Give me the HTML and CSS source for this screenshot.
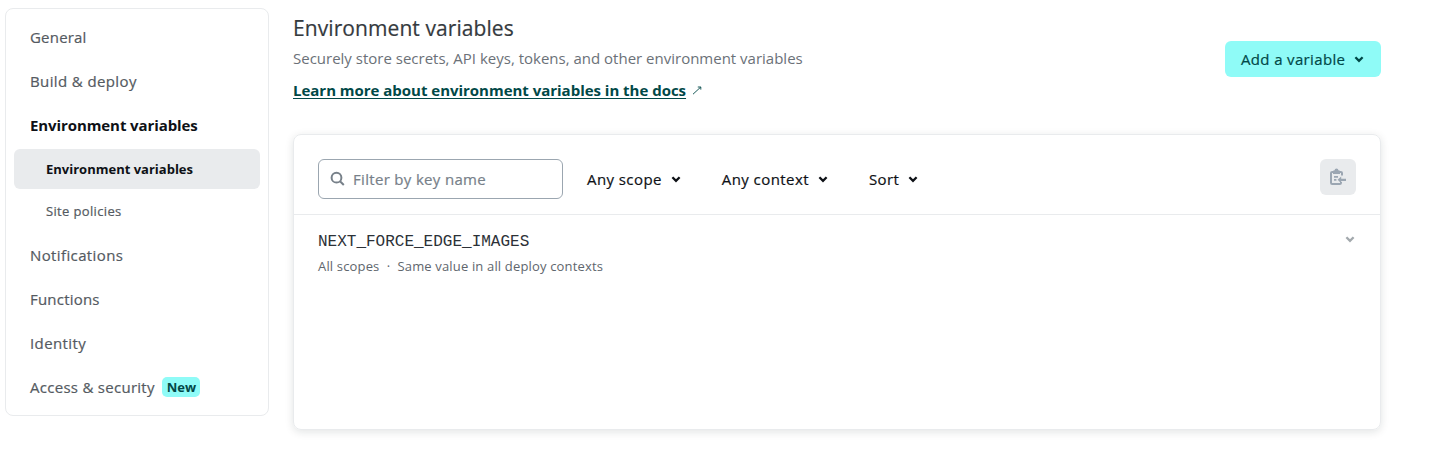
FILE: index.html
```html
<!DOCTYPE html>
<html lang="en">
<head>
<meta charset="utf-8">
<title>Environment variables</title>
<link rel="stylesheet" href="styles.css">
</head>
<body>
<div class="layout">
  <nav class="sidebar">
    <a class="item snug">General</a>
    <a class="item loose">Build &amp; deploy</a>
    <a class="item current">Environment variables</a>
    <a class="item sub active">Environment variables</a>
    <a class="item sub tight">Site policies</a>
    <a class="item loose">Notifications</a>
    <a class="item snug">Functions</a>
    <a class="item loose">Identity</a>
    <a class="item">Access &amp; security<span class="badge">New</span></a>
  </nav>
  <main class="main">
    <header class="head">
      <div>
        <h1>Environment variables</h1>
        <p class="desc">Securely store secrets, API keys, tokens, and other environment variables</p>
        <p class="docs"><a>Learn more about environment variables in the docs</a>
          <svg width="10" height="10" viewBox="0 0 10 10"><path d="M1 9.2 8.6 2.2M5.8 2h3v2.6" fill="none" stroke="currentColor" stroke-width=".9"/></svg>
        </p>
      </div>
      <button class="add"><span>Add a variable</span>
        <svg class="chev" viewBox="0 0 10 7"><path d="M1.4 1.3 5 4.9 8.6 1.3"/></svg></button>
    </header>
    <section class="card">
      <div class="toolbar">
        <label class="search">
          <svg width="16" height="16" viewBox="0 0 16 16"><circle cx="6.5" cy="6.7" r="4.9"/><path d="m10 10.2 3.8 3.8"/></svg>
          <span>Filter by key name</span>
        </label>
        <div class="drop"><span>Any scope</span><svg class="chev" viewBox="0 0 10 7"><path d="M1.4 1.3 5 4.9 8.6 1.3"/></svg></div>
        <div class="drop"><span>Any context</span><svg class="chev" viewBox="0 0 10 7"><path d="M1.4 1.3 5 4.9 8.6 1.3"/></svg></div>
        <div class="drop"><span>Sort</span><svg class="chev" viewBox="0 0 10 7"><path d="M1.4 1.3 5 4.9 8.6 1.3"/></svg></div>
        <button class="paste" aria-label="Paste">
          <svg width="16" height="16" viewBox="0 0 16 16"><path d="M3 2.9H2.2Q1 2.9 1 4v9.8q0 1.2 1.2 1.2h7.6q1.2 0 1.2-1.2V13M10 2.9h.8q1.2 0 1.2 1.2v2.4" fill="none" stroke="currentColor" stroke-width="2"/><path d="M3 5V1.8L4.6 1.2a1.9 1.7 0 0 1 3.8 0L10 1.8V5zM4 7h4v1.7H4zM4 10h2.4v1.7H4zM7.6 10.8l3.6-3.4v2.3H16v2.2h-4.8v2.3z" fill="currentColor"/></svg>
        </button>
      </div>
      <div class="row">
        <div>
          <div class="key">NEXT_FORCE_EDGE_IMAGES</div>
          <div class="meta"><span>All scopes</span><span class="dot">·</span><span>Same value in all deploy contexts</span></div>
        </div>
        <svg class="chev muted" viewBox="0 0 10 7"><path d="M1.4 1.3 5 4.9 8.6 1.3"/></svg>
      </div>
    </section>
  </main>
</div>
</body>
</html>
```
FILE: styles.css
```css
* { box-sizing: border-box; }
body {
  margin: 0;
  min-height: 457px;
  background: #fff;
  font-family: "Open Sans", "Noto Sans", sans-serif;
  font-size: 15px;
  color: #545a61;
}
.layout { display: flex; gap: 24px; padding: 8px 0 19px 5px; align-items: flex-start; }
.sidebar {
  width: 264px;
  height: 408px;
  padding: 8px;
  border: 1px solid #e9ebed;
  border-radius: 8px;
  display: flex;
  flex-direction: column;
  gap: 4px;
}
.item {
  height: 40px;
  flex: none;
  padding: 0 16px;
  border-radius: 6px;
  display: flex;
  align-items: center;
  gap: 7.7px;
  letter-spacing: .28px;
  -webkit-text-stroke: .2px currentColor;
  white-space: nowrap;
}
.snug { letter-spacing: .2px; }
.loose { letter-spacing: .38px; }
.current { color: #0e1116; font-weight: 700; letter-spacing: -.09px; -webkit-text-stroke: 0; }
.sub { padding-left: 32px; font-size: 13px; letter-spacing: .35px; }
.active { background: #e9ebed; color: #0e1116; font-weight: 700; letter-spacing: 0; -webkit-text-stroke: 0; }
.tight { margin-top: -2px; }
.badge {
  width: 38px;
  height: 20px;
  border-radius: 5px;
  background: #8ffbf7;
  color: #014847;
  font-size: 13px;
  font-weight: 700;
  letter-spacing: 0;
  line-height: 20px;
  text-align: center;
  -webkit-text-stroke: 0;
}
.main { width: 1088px; }
.head { height: 126px; display: flex; justify-content: space-between; white-space: nowrap; }
h1 { margin: 6px 0 0; font-size: 21px; line-height: 28px; font-weight: 400; letter-spacing: .08px; color: #353a3e; -webkit-text-stroke: .2px #353a3e; }
p { margin: 0; }
.desc { margin-top: 4px; line-height: 24px; color: #6b7178; }
.docs { margin-top: 8px; line-height: 24px; color: #014847; display: flex; align-items: center; gap: 6px; letter-spacing: -.02px; }
.docs a { font-weight: 700; text-decoration: underline; text-underline-offset: 2px; text-decoration-thickness: 1px; }
.add {
  margin-top: 33px;
  width: 156px;
  height: 36px;
  padding: 0 16px;
  border: 0;
  border-radius: 6px;
  background: #8ffbf7;
  color: #014847;
  font: 400 15px "Open Sans", sans-serif;
  letter-spacing: .35px;
  -webkit-text-stroke: .2px currentColor;
  display: flex;
  align-items: center;
  justify-content: space-between;
}
.chev { width: 10px; height: 7px; flex: none; margin-right: 1px; fill: none; stroke: currentColor; stroke-width: 2.3; }
.card {
  height: 296px;
  border: 1px solid #e9ebed;
  border-radius: 8px;
  box-shadow: 0 2px 8px rgba(14, 30, 37, .12);
}
.toolbar {
  height: 80px;
  padding: 24px 24px 0;
  border-bottom: 1px solid #e9ebed;
  display: flex;
  align-items: flex-start;
  white-space: nowrap;
}
.search {
  width: 245px;
  height: 40px;
  margin-right: 24px;
  padding-left: 11px;
  border: 1px solid #9ba6b0;
  border-radius: 6px;
  display: flex;
  align-items: center;
  gap: 7px;
  letter-spacing: .32px;
  -webkit-text-stroke: .2px currentColor;
  color: #778089;
}
.search svg { fill: none; stroke: #778089; stroke-width: 2; }
.drop { height: 40px; display: flex; align-items: center; gap: 9px; letter-spacing: .42px; -webkit-text-stroke: .2px currentColor; color: #0e1116; margin-right: 40px; }
.paste {
  margin-left: auto;
  width: 36px;
  height: 36px;
  padding: 0;
  border: 0;
  border-radius: 6px;
  background: #e9ebed;
  color: #9ba6b2;
  display: grid;
  place-items: center;
}
.paste svg { overflow: visible; }
.row { padding: 17px 24px 0; display: flex; justify-content: space-between; }
.key { padding-top: 1px; font: 16px/19px "Courier New", "Liberation Mono", monospace; color: #2c3137; }
.meta { margin-top: 4px; font-size: 13px; letter-spacing: .16px; line-height: 20px; color: #60666d; white-space: nowrap; display: flex; }
.dot { width: 18px; text-align: center; }
.muted { margin-top: 4px; color: #a3a9ad; }
```
